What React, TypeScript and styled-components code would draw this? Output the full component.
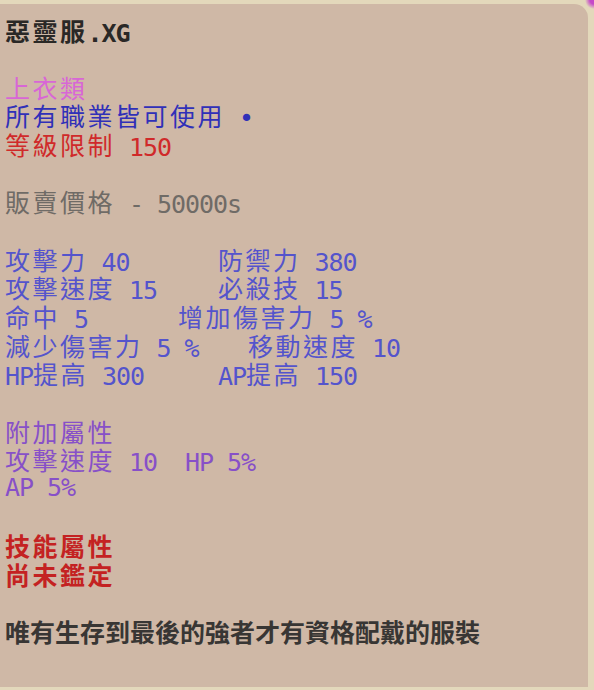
import React from 'react';
import styled, { createGlobalStyle } from 'styled-components';

const LINE = 28.67;

const GlobalStyle = createGlobalStyle`
  html, body {
    margin: 0;
    padding: 0;
  }
  body {
    width: 594px;
    height: 690px;
    overflow: hidden;
    background:
      radial-gradient(circle at 594px 0, #c548c8 0, #c548c8 4px, transparent 9px),
      #e3d8bb;
  }
`;

const Tooltip = styled.div`
  box-sizing: border-box;
  width: 588px;
  height: 683px;
  margin-top: 4px;
  padding: 11.5px 0 0 5px;
  background: #cfb8a6;
  border-top-right-radius: 14px;
`;

const Line = styled.div<{ $color: string; $bold?: boolean; $tight?: boolean }>`
  height: ${LINE}px;
  line-height: ${LINE}px;
  white-space: pre;
  color: ${(p) => p.$color};
  font-weight: ${(p) => (p.$bold ? 700 : 400)};

  .cjk {
    letter-spacing: ${(p) => (p.$tight ? '0px' : '2.5px')};
  }
`;

const StatRow = styled(Line)<{ $split: number }>`
  display: grid;
  grid-template-columns: ${(p) => p.$split}px auto;
`;

const Spacer = styled.div`
  height: ${LINE}px;
`;

const Cjk = styled.span`
  display: inline-block;
  height: ${LINE}px;
  overflow: visible;
  font-family: 'Noto Sans CJK TC', 'Noto Sans CJK SC', sans-serif;
  font-size: 25px;
`;

const Lat = styled.span`
  display: inline-block;
  height: ${LINE}px;
  overflow: visible;
  font-family: 'DejaVu Sans Mono', 'Liberation Mono', monospace;
  font-size: 25px;
  letter-spacing: -1.05px;
  vertical-align: -1px;
`;

// split a string into ascii / cjk runs so each gets its own font
const Txt = ({ s }: { s: string }) => {
  const runs = s.match(/[\x20-\x7E•]+|[^\x20-\x7E•]+/g) || [];
  return (
    <>
      {runs.map((r, i) =>
        /^[\x20-\x7E•]/.test(r) ? (
          <Lat key={i}>{r}</Lat>
        ) : (
          <Cjk key={i} className="cjk">
            {r}
          </Cjk>
        )
      )}
    </>
  );
};

const STAT = '#5454cc';

const stats: [string, string, number][] = [
  ['攻擊力 40', '防禦力 380', 213],
  ['攻擊速度 15', '必殺技 15', 213],
  ['命中 5', '增加傷害力 5 %', 173],
  ['減少傷害力 5 %', '移動速度 10', 243],
  ['HP提高 300', 'AP提高 150', 213],
];

export default function App() {
  return (
    <>
      <GlobalStyle />
      <Tooltip>
        <Line $color="#2a2826" $bold>
          <Txt s="惡靈服.XG" />
        </Line>
        <Spacer />
        <Line $color="#d866d6">
          <Txt s="上衣類" />
        </Line>
        <Line $color="#3030b8">
          <Txt s="所有職業皆可使用 •" />
        </Line>
        <Line $color="#d02a2a">
          <Txt s="等級限制 150" />
        </Line>
        <Spacer />
        <Line $color="#6f6b66">
          <Txt s="販賣價格 - 50000s" />
        </Line>
        <Spacer />
        {stats.map(([a, b, x]) => (
          <StatRow key={a} $color={STAT} $split={x}>
            <span>
              <Txt s={a} />
            </span>
            <span>
              <Txt s={b} />
            </span>
          </StatRow>
        ))}
        <Spacer />
        <Line $color="#8750c8">
          <Txt s="附加屬性" />
        </Line>
        <Line $color="#8750c8">
          <Txt s="攻擊速度 10  HP 5%" />
        </Line>
        <Line $color="#8750c8">
          <Txt s="AP 5%" />
        </Line>
        <Spacer />
        <Line $color="#c42222" $bold>
          <Txt s="技能屬性" />
        </Line>
        <Line $color="#c42222" $bold>
          <Txt s="尚未鑑定" />
        </Line>
        <Spacer />
        <Line $color="#383634" $bold $tight>
          <Txt s="唯有生存到最後的強者才有資格配戴的服裝" />
        </Line>
      </Tooltip>
    </>
  );
}
